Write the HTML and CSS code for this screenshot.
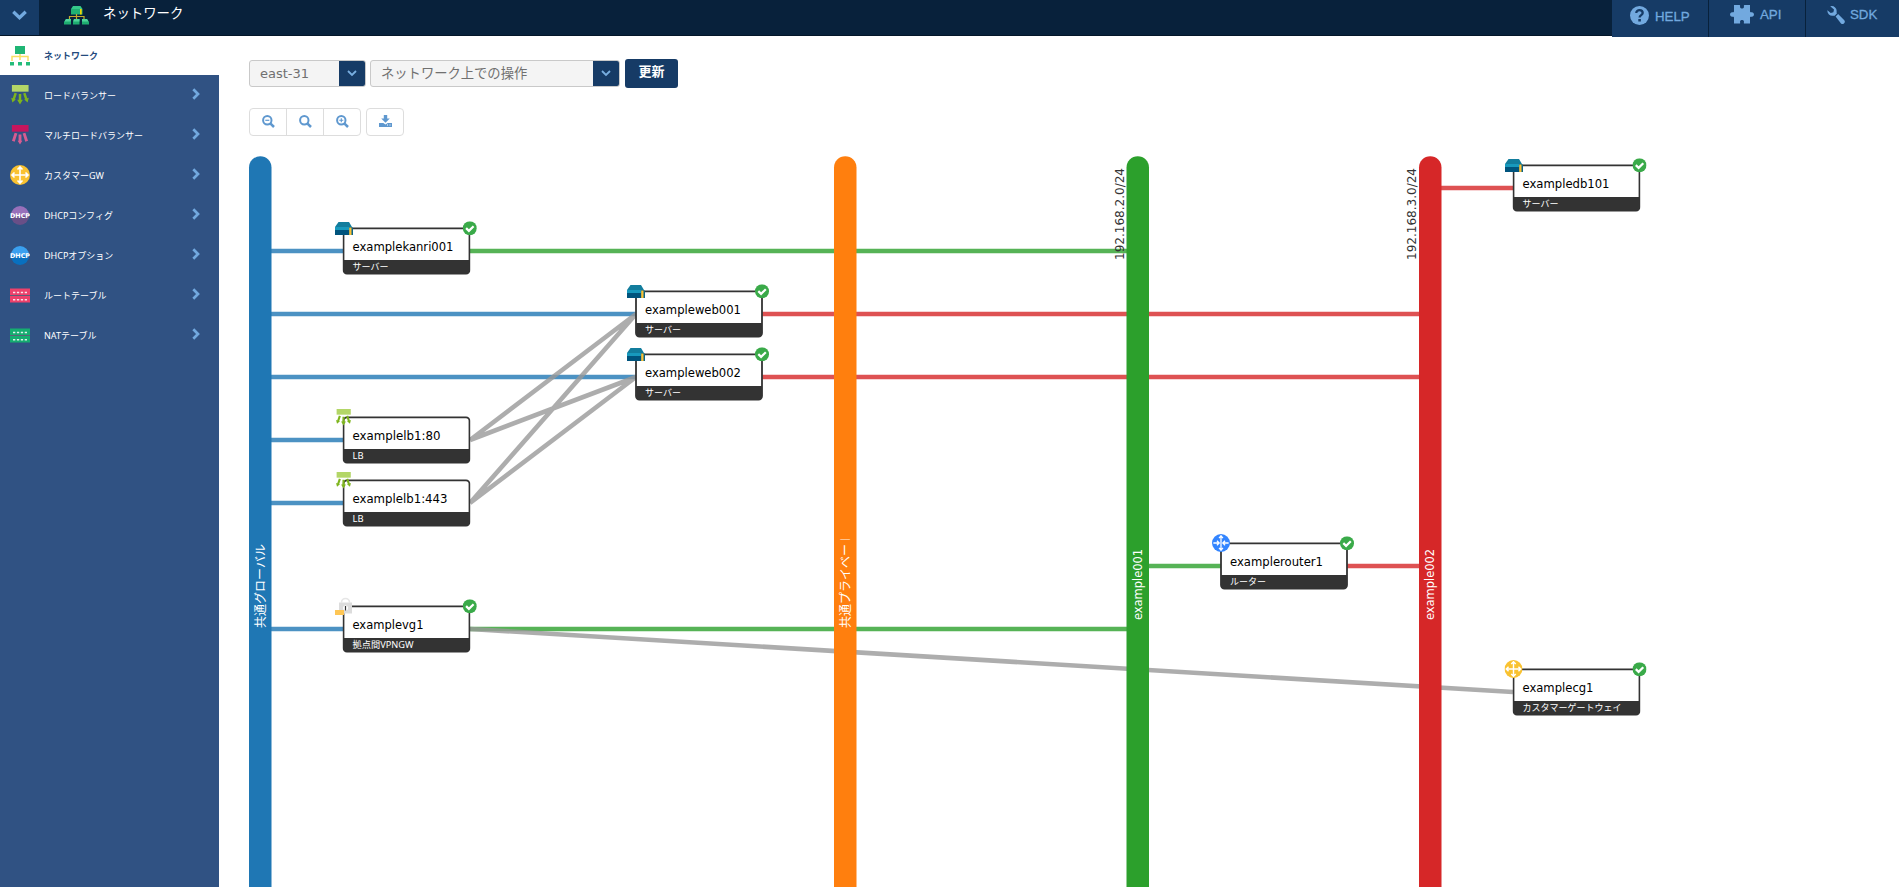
FILE: index.html
```
<!DOCTYPE html>
<html lang="ja">
<head>
<meta charset="utf-8">
<title>ネットワーク</title>
<link rel="stylesheet" href="styles.css">
</head>
<body>
<svg class="defs" width="0" height="0" aria-hidden="true">
  <defs>
    <symbol id="i-lb" viewBox="0 0 20 21"><path d="M5.500 8.500L3.300 15M14.500 8.500l2.200 6.500M10 9.500v7" fill="none" stroke="#7eb51c" stroke-width="2.600"/><path d="M.8 13.500l4.800 1.600-3.600 3.200zM19.200 13.500l-4.800 1.600 3.600 3.200zM7 15.500h6l-3 5z" fill="#7eb51c"/><rect x="1.500" y="0" width="17.500" height="7" fill="#b3d667"/></symbol>
    <symbol id="i-mlb" viewBox="0 0 20 21"><path d="M5.800 8.500L3 17M14.200 8.500L17 17M10 10v7" fill="none" stroke="#d75c91" stroke-width="3"/><path d="M7.500 16.500h5L10 20.500z" fill="#d75c91"/><rect x="1.500" y="0" width="17.500" height="7" fill="#c6155d"/></symbol>
    <symbol id="i-cross" viewBox="0 0 20 20"><circle cx="10" cy="10" r="10"/><path d="M10 2.500v15M2.500 10h15M7.500 4.500L10 2l2.500 2.500M7.500 15.500L10 18l2.500-2.500M4.500 7.500L2 10l2.500 2.500M15.500 7.500L18 10l-2.500 2.500" fill="none" stroke="#fff" stroke-width="1.600"/></symbol>
    <symbol id="i-router" viewBox="0 0 20 20"><circle cx="10" cy="10" r="10" fill="#3385ff"/><path d="M10 2v16M1.500 10h6M12.500 10h6M7.800 4.500L10 2l2.200 2.500M7.800 15.500L10 18l2.200-2.500M5.500 7.500L8 10l-2.500 2.500M14.500 7.500L12 10l2.500 2.500" fill="none" stroke="#fff" stroke-width="1.400"/></symbol>
    <symbol id="i-table" viewBox="0 0 20 15"><rect width="20" height="6.500" y=".5"/><rect width="20" height="6.500" y="8"/><path d="M0 7.500h20" stroke="#5b6078"/><path d="M3 4.500h14M3 11.700h14" stroke="#fff" stroke-width="1.600" stroke-dasharray="2.300 1.600" opacity=".85"/></symbol>
    <symbol id="i-server" viewBox="0 0 18 13"><path d="M3.500 0h10.500l3 5H0z" fill="#127d9d"/><path d="M0 5h14v3H0z" fill="#1799bd"/><path d="M0 8h14v5H0z" fill="#00547d"/><path d="M14 5h3l1 1v7h-4z" fill="#0b6487"/><path d="M14.200 5.500h2.300V13h-2.300z" fill="#fcc133"/></symbol>
    <symbol id="i-ok" viewBox="0 0 14 14"><circle cx="7" cy="7" r="7" fill="#3aaa49"/><path d="M3.300 6.800l2.800 2.800 4.700-4.700" fill="none" stroke="#fff" stroke-width="2.200"/></symbol>
    <symbol id="i-chev" viewBox="0 0 8 12"><path d="M1.300 1.300L6 6l-4.700 4.700" fill="none" stroke="#72a9df" stroke-width="2.700"/></symbol>
    <symbol id="i-down" viewBox="0 0 10 7"><path d="M1 1l4 4 4-4" fill="none" stroke="#78aee0" stroke-width="1.800"/></symbol>
    <symbol id="i-mag" viewBox="0 0 13 13"><circle cx="5.300" cy="5.300" r="4.200" fill="none" stroke="#5f98cf" stroke-width="2"/><path d="M8.300 8.300l3.700 3.700" stroke="#5f98cf" stroke-width="2.500"/></symbol>
    <symbol id="i-box" viewBox="0 0 128 49"><rect x="1" y="1.300" width="126" height="45.300" rx="3.500" fill="#fff" stroke="#333" stroke-width="1.800"/><path d="M1 33h126v10.600a3 3 0 0 1-3 3H4a3 3 0 0 1-3-3z" fill="#333"/></symbol>
  </defs>
</svg>

<header class="topbar">
  <button class="menu-toggle" aria-label="menu"><svg width="15" height="11" viewBox="0 0 15 11"><path d="M1.300 1.800l6.200 6 6.200-6" fill="none" stroke="#72a9df" stroke-width="3.300"/></svg></button>
  <svg class="brand-icon" width="25" height="19" viewBox="0 0 25 19"><path d="M9 0h7.500l2 3H7z" fill="#35c98a"/><path d="M7 3h11.500v5.500H7z" fill="#1fb173"/><path d="M16 3h1.700v5.500H16z" fill="#f2d300"/><path d="M12.500 8v6M5.500 13.500v-3H20v3" fill="none" stroke="#c4a92c" stroke-width="1.200"/><path d="M2 13h5v5.500H0V16zM10 13h5.500v5.500H9V16zM18 13h5l2 3v2.500h-7z" fill="#1ead70"/><path d="M2 13h5l-.5 2.500H.5zM10 13h5.500v2.500H9.200zM18 13h5l1.500 2.500H18z" fill="#50d59b"/></svg>
  <h1 class="brand">ネットワーク</h1>
  <nav class="top-links">
    <a class="top-link help"><svg width="19" height="19" viewBox="0 0 19 19"><circle cx="9.500" cy="9.500" r="9.500" fill="#72a9df"/><path d="M6.300 7c0-3.800 6.400-3.600 6.400 0 0 2.200-3.100 2.100-3.100 4.500" fill="none" stroke="#163b66" stroke-width="2.300"/><path d="M8.300 13h2.600v2.500H8.300z" fill="#163b66"/></svg><span>HELP</span></a>
    <a class="top-link api"><svg width="24" height="19" viewBox="0 0 24 19"><path d="M4 0h5.500c1.200 0 .2 1.500.7 2.500.6 1.300 3 1.300 3.600 0C14.300 1.500 13.300 0 14.500 0H20v6.300c0 1.300 1 .9 1.800.9 2.900 0 2.900 4.600 0 4.600-.8 0-1.800-.5-1.800.9v5.800h-5.500c-1.300 0-.2-1.400-.7-2.500-.6-1.400-3-1.400-3.600 0-.5 1.100.6 2.500-.7 2.500H4v-5.800c0-1.400-1-.9-1.800-.9-2.900 0-2.900-4.600 0-4.600.8 0 1.800.4 1.800-.9z" fill="#72a9df"/></svg><span>API</span></a>
    <a class="top-link sdk"><svg width="18" height="18" viewBox="0 0 18 18"><path d="M3.200.3a5 5 0 0 1 6.300 6l.5 1-2.300 2.400-1.500 0A5 5 0 0 1 .4 4.200l3.300 2.700 2.700-.6.600-2.700zM8.600 10.600l2.500-2.500 6.200 6.100a2.400 2.400 0 0 1-3.300 3.400z" fill="#72a9df"/></svg><span>SDK</span></a>
  </nav>
</header>

<div class="shell">
  <nav class="sidebar">
    <a class="item current"><svg class="ico" viewBox="0 0 20 20"><path d="M10 8v6M2 15v-4.500h16V15" fill="none" stroke="#f7df62" stroke-width="1.500"/><path d="M5 0h10v8H5z" fill="#1fb574"/><path d="M0 16h4v3.500H0zM8 16h4v3.500H8zM16 16h4v3.500h-4z" fill="#24bc7b"/></svg><span>ネットワーク</span></a>
    <a class="item"><svg class="ico"><use href="#i-lb"/></svg><span>ロードバランサー</span><svg class="chev"><use href="#i-chev"/></svg></a>
    <a class="item"><svg class="ico"><use href="#i-mlb"/></svg><span>マルチロードバランサー</span><svg class="chev"><use href="#i-chev"/></svg></a>
    <a class="item"><svg class="ico gw"><use href="#i-cross"/></svg><span>カスタマーGW</span><svg class="chev"><use href="#i-chev"/></svg></a>
    <a class="item"><svg class="ico" viewBox="0 0 20 20"><circle cx="10" cy="10" r="9" fill="#9870ba"/><path d="M1 11h18a9 9 0 0 1-18 0" fill="#694f87"/><text class="dhcp" x="0" y="12.500" textLength="20" lengthAdjust="spacingAndGlyphs">DHCP</text></svg><span>DHCPコンフィグ</span><svg class="chev"><use href="#i-chev"/></svg></a>
    <a class="item"><svg class="ico" viewBox="0 0 20 20"><circle cx="10" cy="10" r="9" fill="#3aa0ef"/><path d="M1 11h18a9 9 0 0 1-18 0" fill="#0870bf"/><text class="dhcp" x="0" y="12.500" textLength="20" lengthAdjust="spacingAndGlyphs">DHCP</text></svg><span>DHCPオプション</span><svg class="chev"><use href="#i-chev"/></svg></a>
    <a class="item"><svg class="ico route"><use href="#i-table"/></svg><span>ルートテーブル</span><svg class="chev"><use href="#i-chev"/></svg></a>
    <a class="item"><svg class="ico nat"><use href="#i-table"/></svg><span>NATテーブル</span><svg class="chev"><use href="#i-chev"/></svg></a>
  </nav>

  <main class="content">
    <div class="controls">
      <div class="select zone"><span>east-31</span><i><svg width="10" height="7"><use href="#i-down"/></svg></i></div>
      <div class="select action"><span>ネットワーク上での操作</span><i><svg width="10" height="7"><use href="#i-down"/></svg></i></div>
      <button class="refresh">更新</button>
    </div>
    <div class="tools">
      <div class="group">
        <button aria-label="zoom out"><svg width="13" height="13" viewBox="0 0 13 13"><use href="#i-mag"/><path d="M3.300 5.300h4" stroke="#5f98cf" stroke-width="1.200"/></svg></button>
        <button aria-label="zoom reset"><svg width="13" height="13"><use href="#i-mag"/></svg></button>
        <button aria-label="zoom in"><svg width="13" height="13" viewBox="0 0 13 13"><use href="#i-mag"/><path d="M3.300 5.300h4M5.300 3.300v4" stroke="#5f98cf" stroke-width="1.100"/></svg></button>
      </div>
      <div class="group"><button class="save" aria-label="download"><svg width="13" height="12" viewBox="0 0 13 12"><path d="M4.800 0h3.400v3.500h2.600L6.500 7.800 2.200 3.500h2.600z" fill="#5f98cf"/><path d="M0 8h4.300l2.200 1.500L8.700 8H13v4H0z" fill="#5f98cf"/><path d="M8 10h1M10.500 10h1" stroke="#fff"/></svg></button></div>
    </div>

    <svg class="diagram" width="1680" height="737" viewBox="219 150 1680 737">
      <g class="links">
        <g class="global"><path d="M271 251h73M271 314h366M271 377h366M271 440h73M271 503h73M271 629h73"/></g>
        <g class="net1"><path d="M470 251h657M470 629h657M1149 566h72"/></g>
        <g class="net2"><path d="M762 314h658M762 377h658M1347 566h73M1441 188h72"/></g>
        <g class="peer"><path d="M470 440L636 314M470 440L636 377M470 503L636 314M470 503L636 377M470 629L1513 692"/></g>
      </g>
      <g class="bars">
        <rect x="249" y="156.300" width="22.500" height="760" rx="11.250" fill="#1f77b4"/>
        <rect x="834" y="156.300" width="22.500" height="760" rx="11.250" fill="#ff7f0e"/>
        <rect x="1126.500" y="156.300" width="22.500" height="760" rx="11.250" fill="#2ca02c"/>
        <rect x="1419" y="156.300" width="22.500" height="760" rx="11.250" fill="#d62728"/>
      </g>
      <clipPath id="label-clip"><rect x="834" y="539.500" width="23" height="100"/></clipPath>
      <g class="bar-label">
        <text transform="translate(264.500 628) rotate(-90)" textLength="84">共通グローバル</text>
        <g clip-path="url(#label-clip)"><text transform="translate(849.500 628) rotate(-90)" textLength="96">共通プライベート</text></g>
        <text transform="translate(1141.500 620) rotate(-90)" textLength="71" lengthAdjust="spacingAndGlyphs">example001</text>
        <text transform="translate(1434 620) rotate(-90)" textLength="71" lengthAdjust="spacingAndGlyphs">example002</text>
      </g>
      <g class="cidr">
        <text transform="translate(1124 260) rotate(-90)" textLength="92" lengthAdjust="spacingAndGlyphs">192.168.2.0/24</text>
        <text transform="translate(1416 260) rotate(-90)" textLength="92" lengthAdjust="spacingAndGlyphs">192.168.3.0/24</text>
      </g>

      <g class="node" transform="translate(342.500 227)"><use href="#i-box" width="128" height="49"/><text x="10" y="24" textLength="101" lengthAdjust="spacingAndGlyphs">examplekanri001</text><text class="kind" x="10" y="42.500" textLength="36">サーバー</text><use href="#i-server" x="-7.500" y="-5" width="18" height="13"/><use href="#i-ok" x="120.300" y="-5.700" width="14" height="14"/></g>
      <g class="node" transform="translate(635 290)"><use href="#i-box" width="128" height="49"/><text x="10" y="24" textLength="96" lengthAdjust="spacingAndGlyphs">exampleweb001</text><text class="kind" x="10" y="42.500" textLength="36">サーバー</text><use href="#i-server" x="-8" y="-5" width="18" height="13"/><use href="#i-ok" x="120" y="-5.700" width="14" height="14"/></g>
      <g class="node" transform="translate(635 353)"><use href="#i-box" width="128" height="49"/><text x="10" y="24" textLength="96" lengthAdjust="spacingAndGlyphs">exampleweb002</text><text class="kind" x="10" y="42.500" textLength="36">サーバー</text><use href="#i-server" x="-8" y="-5" width="18" height="13"/><use href="#i-ok" x="120" y="-5.700" width="14" height="14"/></g>
      <g class="node" transform="translate(342.500 416)"><use href="#i-box" width="128" height="49"/><text x="10" y="24" textLength="88" lengthAdjust="spacingAndGlyphs">examplelb1:80</text><text class="kind" x="10" y="42.500" textLength="11" lengthAdjust="spacingAndGlyphs">LB</text><use href="#i-lb" x="-8" y="-7" width="18" height="17"/></g>
      <g class="node" transform="translate(342.500 479)"><use href="#i-box" width="128" height="49"/><text x="10" y="24" textLength="95" lengthAdjust="spacingAndGlyphs">examplelb1:443</text><text class="kind" x="10" y="42.500" textLength="11" lengthAdjust="spacingAndGlyphs">LB</text><use href="#i-lb" x="-8" y="-7" width="18" height="17"/></g>
      <g class="node" transform="translate(1220 542)"><use href="#i-box" width="128" height="49"/><text x="10" y="24" textLength="93" lengthAdjust="spacingAndGlyphs">examplerouter1</text><text class="kind" x="10" y="42.500" textLength="36">ルーター</text><use href="#i-router" x="-8" y="-8" width="18" height="18"/><use href="#i-ok" x="120" y="-5.700" width="14" height="14"/></g>
      <g class="node" transform="translate(342.500 605)"><use href="#i-box" width="128" height="49"/><text x="10" y="24" textLength="71" lengthAdjust="spacingAndGlyphs">examplevg1</text><text class="kind" x="10" y="42.500" textLength="61" lengthAdjust="spacingAndGlyphs">拠点間VPNGW</text>
        <path d="M-1-2.500a4 4 0 0 1 8 0" fill="none" stroke="#e6e6e6" stroke-width="1.600"/><path d="M-3.500-2.500h13V8.500h-13z" fill="#dcdcdc"/><circle cx="3" cy="3" r="2.500" fill="#fff"/><path d="M3 1v4.500" stroke="#333" stroke-width="1.200"/><path d="M-7.500 5h9v5h-9z" fill="#fec655"/><use href="#i-ok" x="120.300" y="-5.700" width="14" height="14"/></g>
      <g class="node" transform="translate(1512.500 164)"><use href="#i-box" width="128" height="49"/><text x="10" y="24" textLength="87" lengthAdjust="spacingAndGlyphs">exampledb101</text><text class="kind" x="10" y="42.500" textLength="36">サーバー</text><use href="#i-server" x="-7.500" y="-5" width="18" height="13"/><use href="#i-ok" x="120" y="-5.700" width="14" height="14"/></g>
      <g class="node" transform="translate(1512.500 668)"><use href="#i-box" width="128" height="49"/><text x="10" y="24" textLength="71" lengthAdjust="spacingAndGlyphs">examplecg1</text><text class="kind" x="10" y="42.500" textLength="99">カスタマーゲートウェイ</text><use class="gw" href="#i-cross" x="-8" y="-8" width="18" height="18"/><use href="#i-ok" x="120" y="-5.700" width="14" height="14"/></g>
    </svg>
  </main>
</div>
</body>
</html>
```
FILE: styles.css
```
* { box-sizing: border-box; }
body {
  margin: 0;
  height: 887px;
  overflow: hidden;
  background: #fff;
  font-family: "Noto Sans", "Noto Sans CJK JP", sans-serif;
}
svg { display: block; flex: none; }
.defs { display: none; }
button { margin: 0; padding: 0; border: 0; background: none; font: inherit; }

.topbar { display: flex; height: 36px; background: #08213b; border-bottom: 1px solid #041629; }
.menu-toggle { display: flex; justify-content: center; width: 39px; height: 35px; padding-top: 10px; background: #163b66; }
.brand-icon { margin: 6px 0 0 25px; }
.brand { margin: 0 0 0 14px; font-size: 13.4px; font-weight: 400; line-height: 27px; color: #fff; white-space: nowrap; }
.top-links { display: flex; gap: 1px; margin-left: auto; height: 37px; background: #08213b; }
.top-link { display: flex; height: 37px; background: #163b66; color: #72a9df; font: 13.300px/14px "Liberation Sans", sans-serif; -webkit-text-stroke: .3px #72a9df; }
.help { width: 96px; padding-left: 18px; gap: 6px; }
.help svg { margin-top: 6px; }
.help span { margin-top: 10px; }
.api { width: 96px; padding-left: 21px; gap: 6px; }
.api svg { margin-top: 5px; }
.api span, .sdk span { margin-top: 8px; }
.sdk { width: 93px; padding-left: 21px; gap: 5px; }
.sdk svg { margin-top: 6px; }

.shell { display: flex; height: 851px; }
.sidebar { width: 219px; flex: none; background: #305283; }
.item { display: flex; align-items: center; height: 40px; padding: 0 19px 0 10px; font-size: 9px; color: #fff; }
.item.current { height: 39px; background: #fff; color: #244a7d; font-weight: 700; }
.item span { margin-left: 14px; flex: 1; white-space: nowrap; }
.ico { width: 20px; height: 20px; }
.chev { width: 8px; height: 12px; margin-top: -3px; }
.gw { fill: #f9c231; }
.route { fill: #ed416b; height: 15px; }
.nat { fill: #15ad70; height: 15px; }
.dhcp { font: 700 6.500px "DejaVu Sans", sans-serif; fill: #fff; }

.content { flex: 1; min-width: 0; }
.controls { display: flex; align-items: flex-start; height: 72px; padding: 23px 0 0 30px; }
.select { display: flex; height: 27px; margin: 1px 4px 0 0; border: 1px solid #c9c9c9; border-radius: 3px; background: #f4f4f4; color: #707070; font-size: 13.300px; line-height: 25px; overflow: hidden; }
.zone { width: 117px; font-family: "DejaVu Sans", sans-serif; font-size: 13px; padding-left: 10px; }
.action { width: 250px; padding-left: 10px; margin-right: 5px; }
.select span { flex: 1; white-space: nowrap; }
.select i { display: flex; align-items: center; justify-content: center; width: 26px; background: #163b66; }
.refresh { width: 53px; height: 29px; border-radius: 3px; background: #163b66; color: #fff; font-size: 13px; font-weight: 700; line-height: 25px; padding-bottom: 4px; }
.tools { display: flex; gap: 5px; height: 42px; padding-left: 30px; }
.group { display: flex; height: 28px; border: 1px solid #ddd; border-radius: 4px; }
.group button { display: flex; align-items: center; justify-content: center; width: 37px; padding-bottom: 1px; }
.group button:first-child { width: 36px; }
.group button + button { border-left: 1px solid #ddd; }
.group .save { padding-bottom: 3px; }

.diagram { overflow: hidden; }
.links { fill: none; stroke-width: 4.700; }
.links g { opacity: .8; }
.global { stroke: #1f77b4; }
.net1 { stroke: #2ca02c; }
.net2 { stroke: #d62728; }
.peer path { stroke: #999; stroke-width: 4.600; }
.diagram text { font-family: "DejaVu Sans Condensed", "DejaVu Sans", "Noto Sans CJK JP", sans-serif; font-size: 12px; }
.bar-label text { fill: #fff; }
.cidr text { fill: #333; }
.node text.kind { fill: #fff; font-family: "Noto Sans", "Noto Sans CJK JP", sans-serif; font-size: 9px; }
```
